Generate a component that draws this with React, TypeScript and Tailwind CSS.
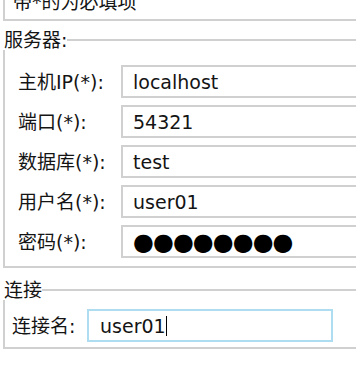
import React from 'react';

const font = { fontFamily: '"DejaVu Sans", "Noto Sans CJK SC", sans-serif' };

const fields = [
  { label: '主机IP(*):', value: 'localhost' },
  { label: '端口(*):', value: '54321' },
  { label: '数据库(*):', value: 'test' },
  { label: '用户名(*):', value: 'user01' },
];

function Row({ label, children }: { label: string; children: React.ReactNode }) {
  return (
    <div className="flex items-center">
      <div className="w-[103px] shrink-0">{label}</div>
      <div className="flex-1 h-[33px] border-2 border-[#d0d0d0] bg-white pl-[10px] flex items-center">
        {children}
      </div>
    </div>
  );
}

export default function App() {
  return (
    <div
      className="w-[356px] h-[370px] overflow-hidden bg-white text-[19px] leading-[20px] text-[#141414]"
      style={font}
    >
      {/* hint box, scrolled partly out of view */}
      <div className="w-[420px] -mt-[8px] h-[29px] ml-[3px] border-l-2 border-b-2 border-[#d0d0d0] pl-[8px]">
        带*的为必填项
      </div>

      {/* 服务器 */}
      <div className="mt-[9px] w-[420px]">
        <div className="flex items-center h-[20px]">
          <span className="pl-[4px]">服务器:</span>
          <div className="flex-1 h-[2px] bg-[#d0d0d0]" />
        </div>
        <div className="ml-[3px] border-l-2 border-b-2 border-[#d0d0d0] pl-[13px] pt-[15px] pb-[8px] flex flex-col gap-[7px]">
          {fields.map((f) => (
            <Row key={f.label} label={f.label}>
              {f.value}
            </Row>
          ))}
          <Row label="密码(*):">
            <span className="text-[24px] tracking-[-1px] text-black">●●●●●●●●</span>
          </Row>
        </div>
      </div>

      {/* 连接 */}
      <div className="mt-[12px] w-[420px]">
        <div className="flex items-center h-[20px]">
          <span className="pl-[4px]">连接</span>
          <div className="flex-1 h-[2px] bg-[#d0d0d0]" />
        </div>
        <div className="ml-[3px] border-l-2 border-b-2 border-[#d0d0d0] pl-[7px] pt-[9px] pb-[5px] flex items-center">
          <div className="w-[75px] shrink-0">连接名:</div>
          <div className="w-[246px] h-[33px] border-2 border-[#aedcf0] pl-[11px] flex items-center">
            user01
            <span className="w-px h-[20px] bg-black" />
          </div>
        </div>
      </div>
    </div>
  );
}
